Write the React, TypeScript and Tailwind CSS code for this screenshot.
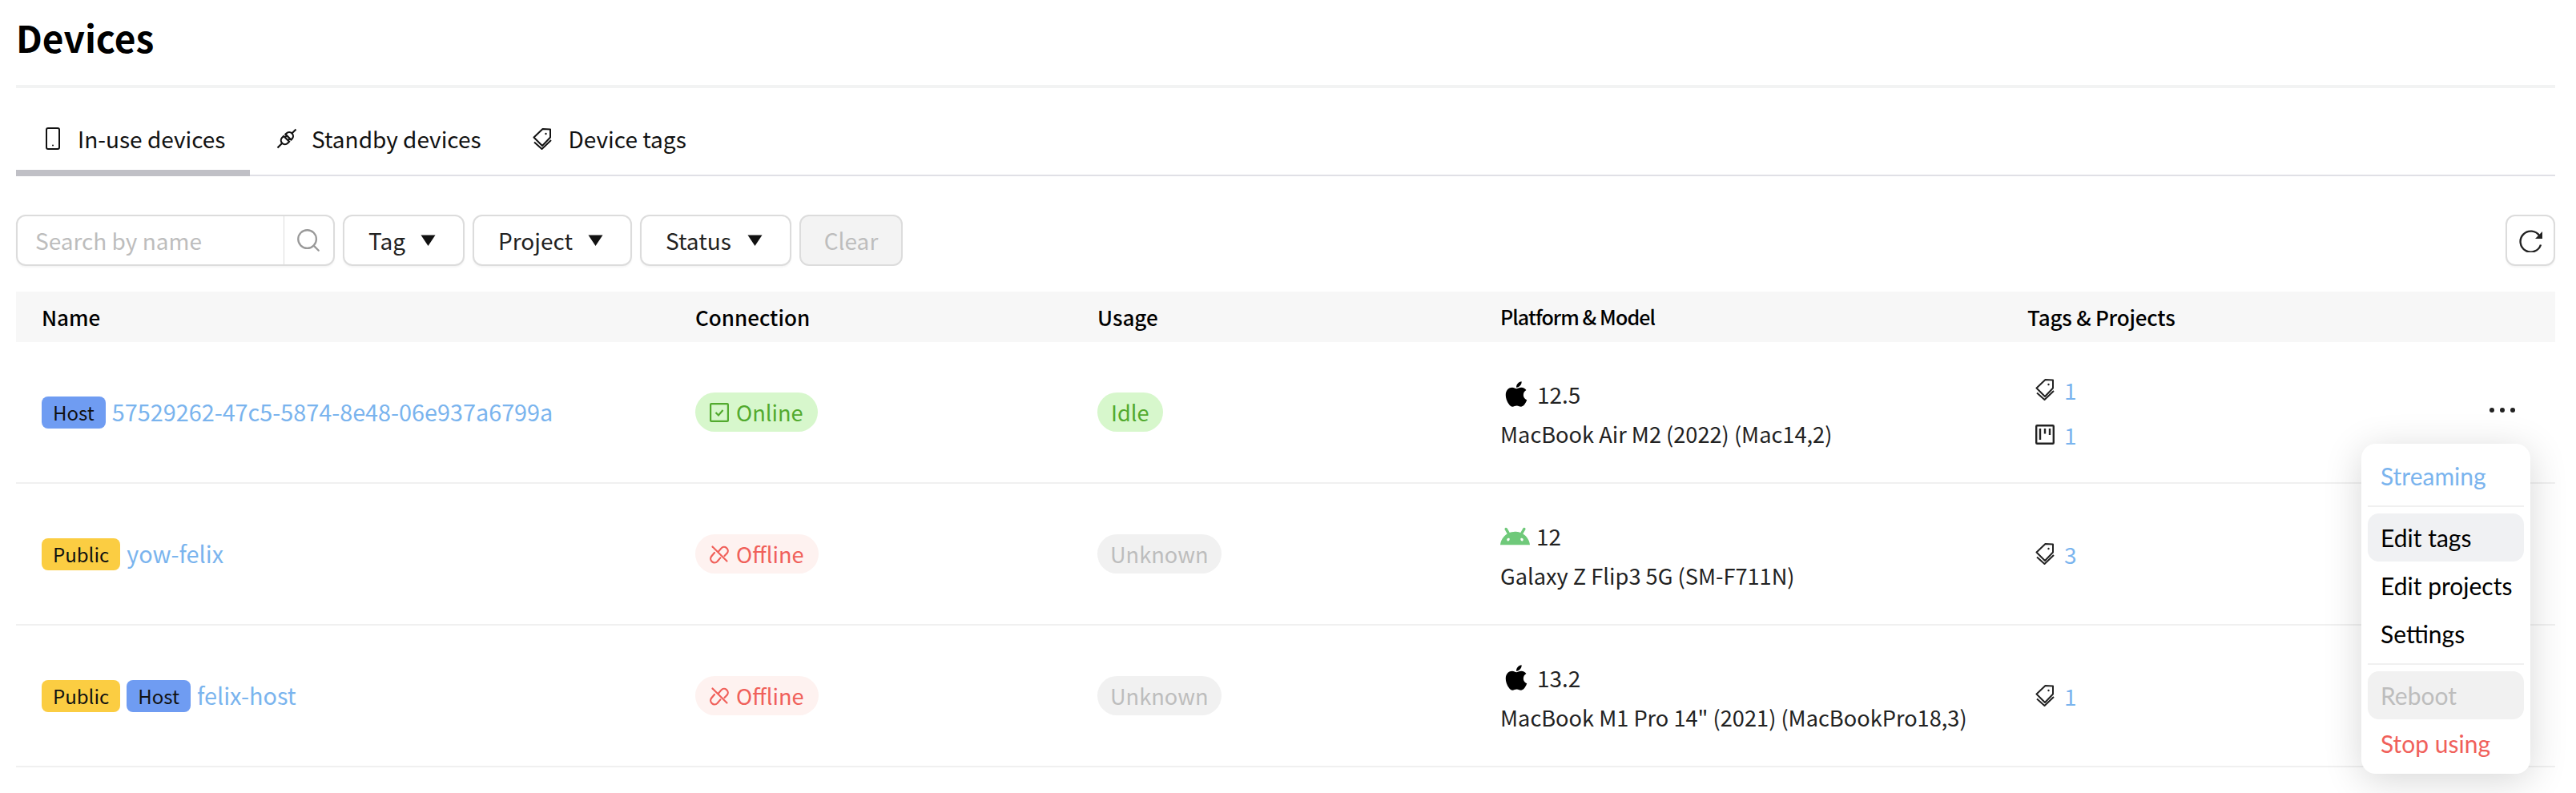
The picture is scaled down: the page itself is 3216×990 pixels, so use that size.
// Devices page: in-use device table with a row action menu open.
import { FaApple } from "react-icons/fa";
import { SiAndroid } from "react-icons/si";
import { Search } from "lucide-react";

type Device = {
  name: string;
  badges: ("Public" | "Host")[];
  online: boolean;
  usage: "Idle" | "Unknown";
  platform: "apple" | "android";
  version: string;
  model: string;
  tags: number;
  projects?: number;
};

const devices: Device[] = [
  {
    name: "57529262-47c5-5874-8e48-06e937a6799a",
    badges: ["Host"],
    online: true,
    usage: "Idle",
    platform: "apple",
    version: "12.5",
    model: "MacBook Air M2 (2022) (Mac14,2)",
    tags: 1,
    projects: 1,
  },
  {
    name: "yow-felix",
    badges: ["Public"],
    online: false,
    usage: "Unknown",
    platform: "android",
    version: "12",
    model: "Galaxy Z Flip3 5G (SM-F711N)",
    tags: 3,
  },
  {
    name: "felix-host",
    badges: ["Public", "Host"],
    online: false,
    usage: "Unknown",
    platform: "apple",
    version: "13.2",
    model: 'MacBook M1 Pro 14" (2021) (MacBookPro18,3)',
    tags: 1,
  },
];

function PhoneIcon() {
  return (
    <svg width="20" height="28" viewBox="0 0 20 28" fill="none" stroke="currentColor" strokeWidth="2">
      <rect x="2" y="1" width="16" height="26" rx="2" />
      <circle cx="10" cy="22.5" r="1" fill="currentColor" stroke="none" />
    </svg>
  );
}

function PlugIcon() {
  return (
    <svg width="26" height="26" viewBox="0 0 24 24" fill="none" stroke="currentColor" strokeWidth="2">
      <g transform="rotate(45 12 12)">
        <path d="M12 -3V3M7.5 9.5V8a4.5 4.5 0 0 1 9 0v1.5zM9.5 9.5v3M14.5 9.5v3M7.5 12.5h9V15a4.5 4.5 0 0 1-9 0zM12 19.5V27" />
      </g>
    </svg>
  );
}

function TagsIcon({ className }: { className?: string }) {
  return (
    <svg className={className} viewBox="0 0 24 27" fill="none" stroke="currentColor" strokeWidth="2" strokeLinejoin="round">
      <path d="M22 1.5 12.5 1 1.5 11.5 12 22 22 11.5z" />
      <circle cx="16.5" cy="7" r="1.2" fill="currentColor" stroke="none" />
      <path d="M2 17.5 11.5 26 23 15" />
    </svg>
  );
}

function ProjectIcon() {
  return (
    <svg width="24" height="25" viewBox="0 0 24 25" fill="none" stroke="currentColor" strokeWidth="2.4">
      <rect x="1.2" y="1.2" width="21.6" height="22.6" rx="1" />
      <path d="M6 5v14M12 5v6.5M18 5v8" />
    </svg>
  );
}

function CheckSquareIcon() {
  return (
    <svg width="24" height="24" viewBox="0 0 24 24" fill="none" stroke="currentColor" strokeWidth="2.2">
      <rect x="1.1" y="1.1" width="21.8" height="21.8" rx="1" />
      <path d="M7.5 12l3.5 3.5 5.5-6.5" />
    </svg>
  );
}

function UnlinkIcon() {
  return (
    <svg width="24" height="24" viewBox="0 0 24 24" fill="none" stroke="currentColor" strokeWidth="2.2" strokeLinecap="round">
      <path d="M3.5 2.5 21.5 20.5" />
      <path d="M11 8.5l3.5-4.1a4.8 4.8 0 0 1 7.3 6.2L18.5 14" />
      <path d="M6 10 2.2 14.5a4.9 4.9 0 0 0 7.3 6.5l3.9-4.6" />
    </svg>
  );
}

function Caret() {
  return (
    <svg width="19" height="14" viewBox="0 0 19 14" className="text-[#111]">
      <path d="M0.5 0.5h18L9.5 14z" fill="currentColor" />
    </svg>
  );
}

function RefreshIcon() {
  return (
    <svg width="32" height="30" viewBox="0 0 32 30" fill="none" stroke="#222" strokeWidth="2.4">
      <path d="M27.5 9.5A13 13 0 1 0 29 20.5" />
      <path d="M31 4v9h-9z" fill="#222" stroke="none" />
    </svg>
  );
}

function FilterButton({ label, className }: { label: string; className: string }) {
  return (
    <button className={`flex h-16 items-center justify-between rounded-[12px] border-2 border-[#dcdcdc] bg-white text-[28px] text-[#222] shadow-[0_2px_2px_rgba(0,0,0,0.04)] ${className}`}>
      {label}
      <Caret />
    </button>
  );
}

function Badge({ kind }: { kind: "Public" | "Host" }) {
  return (
    <span
      className={`flex h-10 items-center rounded-[8px] px-[14px] text-[24px] text-[#111] ${
        kind === "Host" ? "bg-[#6f9cf2]" : "bg-[#fbcd42]"
      }`}
    >
      {kind}
    </span>
  );
}

function DeviceRow({ device }: { device: Device }) {
  return (
    <div className="flex h-[177px] items-center border-b-2 border-[#f0f0f0]">
      <div className="flex w-[816px] items-center gap-2 pl-8">
        {device.badges.map((b) => (
          <Badge key={b} kind={b} />
        ))}
        <span className="-mt-[2px] text-[28.8px] text-[#7ab4ee]">{device.name}</span>
      </div>
      <div className="w-[502px] pl-8">
        {device.online ? (
          <span className="inline-flex h-[49px] items-center gap-[9px] rounded-full bg-[#d7f7cc] px-[18px] text-[27.2px] text-[#52aa2e]">
            <CheckSquareIcon />
            Online
          </span>
        ) : (
          <span className="inline-flex h-[49px] items-center gap-[9px] rounded-full bg-[#fef2f0] px-[18px] text-[27.2px] text-[#f0605a]">
            <UnlinkIcon />
            Offline
          </span>
        )}
      </div>
      <div className="w-[503px] pl-8">
        {device.usage === "Idle" ? (
          <span className="inline-flex h-[49px] items-center rounded-full bg-[#d7f7cc] px-[17px] text-[27.2px] text-[#52aa2e]">
            Idle
          </span>
        ) : (
          <span className="inline-flex h-[49px] items-center rounded-full bg-[#f1f1f1] px-4 text-[27.2px] text-[#bdbdbd]">
            Unknown
          </span>
        )}
      </div>
      <div className="flex w-[659px] flex-col gap-[7px] pl-8 pt-1 text-[#222]">
        <div className="flex h-[42px] items-center gap-2 text-[28px]">
          {device.platform === "apple" ? (
            <FaApple className="ml-[2px] text-[36px] text-black" />
          ) : (
            <SiAndroid className="text-[37px] text-[#6fc97a]" />
          )}
          {device.version}
        </div>
        <div className="h-[42px] text-[27.2px] leading-[42px]">{device.model}</div>
      </div>
      <div className="flex flex-1 items-center justify-between">
        <div className="flex flex-col gap-[14px] pl-[41px] text-[28px] text-[#7ab4ee]">
          <div className="flex h-[42px] items-center gap-3">
            <TagsIcon className="h-[27px] w-6 text-[#222]" />
            {device.tags}
          </div>
          {device.projects ? (
            <div className="flex h-[42px] items-center gap-3">
              <span className="text-[#222]">
                <ProjectIcon />
              </span>
              {device.projects}
            </div>
          ) : null}
        </div>
        {device.projects ? (
          <div className="mb-[6px] mr-[50px] flex gap-[7px]">
            <span className="size-[6px] rounded-full bg-[#222]" />
            <span className="size-[6px] rounded-full bg-[#222]" />
            <span className="size-[6px] rounded-full bg-[#222]" />
          </div>
        ) : null}
      </div>
    </div>
  );
}

function ActionMenu() {
  return (
    <div className="absolute left-[2948px] top-[554px] flex h-[412px] w-[211px] flex-col rounded-[18px] bg-white px-2 font-['Lato',sans-serif] text-[30px] shadow-[0_8px_48px_rgba(0,0,0,0.16)]">
      <div className="flex h-[77px] shrink-0 items-center pl-[16px] pt-1 text-[#7ab4ee]">Streaming</div>
      <div className="h-[2px] shrink-0 bg-[#f0f0f0]" />
      <div className="mt-2 flex h-[60px] shrink-0 items-center rounded-[14px] bg-[#f0f1f3] pl-[16px] text-black">Edit tags</div>
      <div className="flex h-[60px] shrink-0 items-center pl-[16px] text-black">Edit projects</div>
      <div className="flex h-[60px] shrink-0 items-center pl-[16px] text-black">Settings</div>
      <div className="mt-[7px] h-[2px] shrink-0 bg-[#f0f0f0]" />
      <div className="mt-2 flex h-[60px] shrink-0 items-center rounded-[14px] bg-[#f1f1f1] pl-[16px] text-[#bdbdbd]">Reboot</div>
      <div className="flex h-[60px] shrink-0 items-center pl-[16px] text-[#f0605a]">Stop using</div>
    </div>
  );
}

export default function App() {
  return (
    <div className="relative h-[990px] w-[3216px] overflow-hidden bg-white pl-5 pr-[26px] font-['Noto_Sans_CJK_KR','Noto_Sans',sans-serif]">
      <div className="flex h-[106px] items-center pb-[14px] text-[46px] font-bold text-black">Devices</div>
      <div className="h-1 bg-[#f2f3f3]" />

      <div className="mt-[44px] flex h-[66px] border-b-2 border-[#e0e0e6] text-[28px] text-[#111]">
        <div className="flex h-[66px] w-[292px] items-start border-b-[8px] border-[#c0c0c6] pl-8 pt-[1px]">
          <span className="flex h-[36px] w-[45px] items-center pl-[4px]">
            <PhoneIcon />
          </span>
          <span className="leading-[36px]">In-use devices</span>
        </div>
        <div className="flex items-start pl-8 pr-8 pt-[1px]">
          <span className="flex h-[36px] w-[45px] items-center pl-[1px]">
            <PlugIcon />
          </span>
          <span className="leading-[36px]">Standby devices</span>
        </div>
        <div className="flex items-start pl-8 pr-8 pt-[1px]">
          <span className="flex h-[36px] w-[45px] items-center">
            <TagsIcon className="h-[27px] w-6" />
          </span>
          <span className="leading-[36px]">Device tags</span>
        </div>
      </div>

      <div className="mt-[48px] flex items-center justify-between">
        <div className="flex items-center gap-[10px]">
          <div className="flex h-16 w-[398px] items-center rounded-[12px] border-2 border-[#dcdcdc] bg-white shadow-[0_2px_2px_rgba(0,0,0,0.04)]">
            <input
              placeholder="Search by name"
              className="h-full w-[333px] border-r border-[#dcdcdc] bg-transparent pl-[22px] text-[28px] outline-none placeholder:text-[#bdbdbd]"
            />
            <Search className="ml-[13px] size-[34px] text-[#999]" strokeWidth={1.6} />
          </div>
          <FilterButton label="Tag" className="w-[152px] pl-[30px] pr-[34px]" />
          <FilterButton label="Project" className="w-[199px] pl-[30px] pr-[34px]" />
          <FilterButton label="Status" className="w-[189px] pl-[30px] pr-[34px]" />
          <button className="h-16 w-[129px] rounded-[12px] border-2 border-[#dcdcdc] bg-[#f3f3f3] text-[28px] text-[#bdbdbd]">
            Clear
          </button>
        </div>
        <button className="flex h-16 w-[62px] items-center justify-center rounded-[12px] border-2 border-[#dcdcdc] bg-white shadow-[0_2px_2px_rgba(0,0,0,0.04)]">
          <RefreshIcon />
        </button>
      </div>

      <div className="mt-8 flex h-[63px] items-center bg-[#f7f7f7] text-[26px] font-medium text-black">
        <div className="w-[816px] pl-8">Name</div>
        <div className="w-[502px] pl-8">Connection</div>
        <div className="w-[503px] pl-8">Usage</div>
        <div className="w-[659px] pl-8 text-[25px] tracking-[-0.9px]">Platform &amp; Model</div>
        <div className="flex-1 pl-[31px] tracking-[-0.2px]">Tags &amp; Projects</div>
      </div>

      {devices.map((d) => (
        <DeviceRow key={d.name} device={d} />
      ))}

      <ActionMenu />
    </div>
  );
}
